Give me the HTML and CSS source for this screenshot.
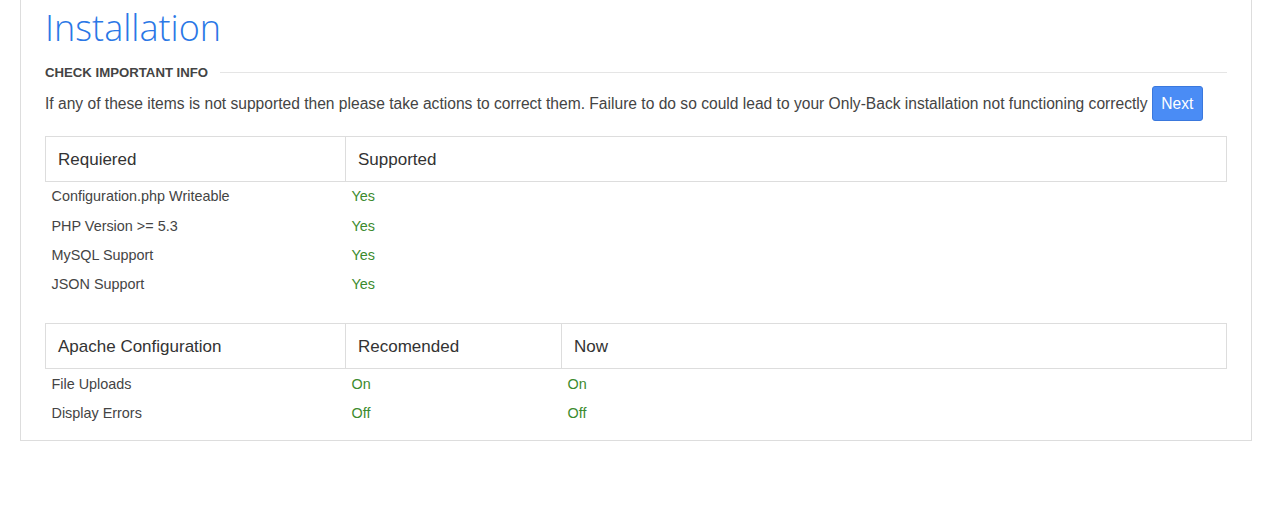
FILE: index.html
```html
<!DOCTYPE html>
<html>
<head>
<meta charset="utf-8">
<link rel="stylesheet" href="styles.css">
</head>
<body>
<div class="panel">
  <h1 class="title">Installation</h1>
  <div class="section-head"><span>CHECK IMPORTANT INFO</span><div class="rule"></div></div>
  <p class="intro">If any of these items is not supported then please take actions to correct them. Failure to do so could lead to your Only-Back installation not functioning correctly <button class="btn">Next</button></p>
  <table class="req first">
    <thead><tr><th class="c1">Requiered</th><th>Supported</th></tr></thead>
    <tbody>
      <tr><td>Configuration.php Writeable</td><td class="ok">Yes</td></tr>
      <tr><td>PHP Version &gt;= 5.3</td><td class="ok">Yes</td></tr>
      <tr><td>MySQL Support</td><td class="ok">Yes</td></tr>
      <tr><td>JSON Support</td><td class="ok">Yes</td></tr>
    </tbody>
  </table>
  <table class="req apache">
    <thead><tr><th class="c1">Apache Configuration</th><th class="c2">Recomended</th><th>Now</th></tr></thead>
    <tbody>
      <tr><td>File Uploads</td><td class="ok">On</td><td class="ok">On</td></tr>
      <tr><td>Display Errors</td><td class="ok">Off</td><td class="ok">Off</td></tr>
    </tbody>
  </table>
</div>
</body>
</html>
```
FILE: styles.css
```css
html, body { margin: 0; padding: 0; background: #fff; }
body { font-family: "Liberation Sans", Arial, sans-serif; color: #444; }
.panel {
  margin: 0 15px 0 20px;
  border: 1px solid #ddd;
  border-top: none;
  padding: 0 24px 13px 24px;
}
.title {
  font-family: "Open Sans", sans-serif;
  font-weight: 300;
  font-size: 36px;
  color: #2a77e6;
  margin: 0;
  line-height: 56px;
}
.section-head {
  display: flex;
  align-items: center;
  gap: 12px;
  margin-top: 7px;
  height: 18px;
}
.section-head span {
  font-size: 13.2px;
  font-weight: bold;
  color: #444;
  white-space: nowrap;
}
.rule { flex: 1; height: 1px; background: #e5e5e5; margin-top: 1px; }
.intro {
  margin: 5px 0 0 0;
  font-size: 15.6px;
  line-height: 36px;
  color: #444;
  white-space: nowrap;
}
.btn {
  font-family: "Liberation Sans", Arial, sans-serif;
  font-size: 15.6px;
  color: #fff;
  background: #4a8cf5;
  border: 1px solid #3a78dd;
  border-radius: 3px;
  padding: 0;
  width: 51px;
  height: 35px;
  line-height: 33px;
  text-align: center;
  vertical-align: middle;
  position: relative;
  top: -1px;
}
.req {
  width: 100%;
  border-collapse: collapse;
  margin-top: 14px;
}
.apache { margin-top: 25px; }
.req th {
  text-align: left;
  font-weight: normal;
  font-size: 17px;
  color: #333;
  border: 1px solid #ddd;
  padding: 2px 12px 0 12px;
  height: 42px;
}
.req th.c1 { width: 275px; }
.req th.c2 { width: 191px; }
.req td {
  font-size: 14.4px;
  padding: 0 6px;
  height: 29px;
  color: #444;
}
.first tbody tr:first-child td { padding-bottom: 1px; height: 28px; }
.req td.ok { color: #3c8b2e; }
```
